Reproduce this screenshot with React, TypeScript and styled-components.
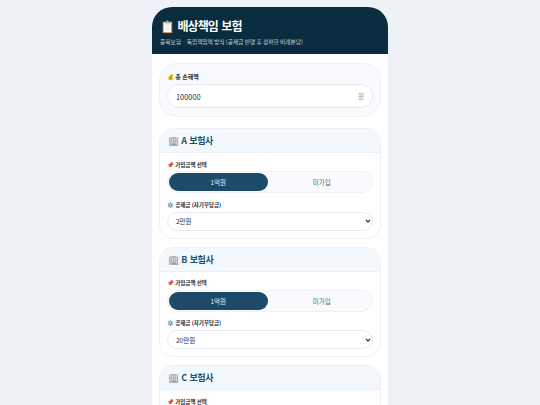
import { FC } from "react"
import styled, { createGlobalStyle } from "styled-components"

const GlobalStyle = createGlobalStyle`
  html, body {
    margin: 0;
    height: 405px;
    overflow: hidden;
    background: #eef2f6;
    font-family: "Noto Sans CJK KR", "Noto Sans", sans-serif;
  }
  * { box-sizing: border-box; }
`

const chevron =
  "data:image/svg+xml,%3Csvg xmlns='http://www.w3.org/2000/svg' viewBox='0 0 6 6'%3E%3Cpath d='M1 2 L3 4 L5 2' fill='none' stroke='%231f2d3a' stroke-width='1.1'/%3E%3C/svg%3E"

const Page = styled.div`
  display: flex;
  justify-content: center;
  padding-top: 7px;
`

const Phone = styled.main`
  width: 236px;
  background: #ffffff;
  border-radius: 20px 20px 0 0;
  overflow: hidden;
`

const Header = styled.header`
  height: 47px;
  background: #0a2c3f;
  padding: 10px 8px 0;
  color: #ffffff;
`

const Title = styled.h1`
  margin: 0;
  font-size: 12px;
  line-height: 18px;
  font-weight: 700;
  letter-spacing: -0.9px;
  word-spacing: 1.5px;
`

const Subtitle = styled.p`
  margin: 1.5px 0 0;
  font-size: 5.7px;
  line-height: 9px;
  color: #c4d3dc;
  white-space: nowrap;
`

const Body = styled.div`
  display: flex;
  flex-direction: column;
  gap: 8px;
  padding: 9px 7px 0;
`

const LossPanel = styled.section`
  height: 54px;
  margin-bottom: 3px;
  padding: 8px 7px 0;
  background: #f8fafd;
  border: 1px solid #edf1f6;
  border-radius: 18px;
`

const Label = styled.div<{ $size?: number }>`
  font-size: ${({ $size }) => $size ?? 5.5}px;
  line-height: 9px;
  font-weight: 600;
  color: #1f2d3a;
  white-space: nowrap;
`

const AmountBox = styled.div`
  display: flex;
  align-items: center;
  height: 24px;
  margin-top: 3px;
  padding: 0 8px;
  background: #ffffff;
  border: 1px solid #e6ebf2;
  border-radius: 12px;
`

const AmountInput = styled.input`
  flex: 1;
  min-width: 0;
  padding: 0;
  border: 0;
  outline: 0;
  background: transparent;
  font-family: inherit;
  font-size: 7.4px;
  color: #1f2d3a;
`

const Unit = styled.span`
  font-size: 6.5px;
  color: #8a949e;
`

const CompanyCard = styled.section`
  flex: none;
  background: #ffffff;
  border: 1px solid #edf1f6;
  border-radius: 14px;
  overflow: hidden;
`

const CompanyHeader = styled.h2`
  display: flex;
  align-items: center;
  height: 24px;
  margin: 0;
  padding: 0 8px;
  background: #f3f8fc;
  border-bottom: 1px solid #e9f0f6;
  font-size: 9px;
  font-weight: 700;
  letter-spacing: -0.4px;
  word-spacing: 1px;
  color: #1d5070;
  white-space: pre;
`

const CompanyBody = styled.div`
  padding: 7.5px 7px 7px;
`

const Toggle = styled.div`
  display: grid;
  grid-template-columns: 1fr 1fr;
  gap: 5px;
  height: 22px;
  margin: 1.5px 0 7.5px;
  padding: 1px;
  background: #f8fafd;
  border: 1px solid #edf1f6;
  border-radius: 11px;
`

const Option = styled.div<{ $active?: boolean }>`
  display: flex;
  align-items: center;
  justify-content: center;
  border-radius: 9px;
  font-size: 6.5px;
  color: ${({ $active }) => ($active ? "#e8f0f5" : "#5b6672")};
  background: ${({ $active }) => ($active ? "#1d4a68" : "transparent")};
`

const Select = styled.select`
  display: block;
  width: 100%;
  height: 19px;
  margin-top: 2px;
  padding: 0 0 0 8px;
  appearance: none;
  background: #ffffff url("${chevron}") no-repeat right 1px center / 6px 6px;
  border: 1px solid #e6ebf2;
  border-radius: 10px;
  font-family: inherit;
  font-size: 6.5px;
  color: #1f2d3a;
  outline: 0;
`

const Company: FC<{ name: string; deductible: string }> = ({ name, deductible }) => (
  <CompanyCard>
    <CompanyHeader>🏢 {name} 보험사</CompanyHeader>
    <CompanyBody>
      <Label>📌 가입금액 선택</Label>
      <Toggle>
        <Option $active>1억원</Option>
        <Option>미가입</Option>
      </Toggle>
      <Label>⚙️ 공제금 (자기부담금)</Label>
      <Select defaultValue={deductible}>
        <option>2만원</option>
        <option>20만원</option>
      </Select>
    </CompanyBody>
  </CompanyCard>
)

export default function App() {
  return (
    <Page>
      <GlobalStyle />
      <Phone>
        <Header>
          <Title>📋 배상책임 보험</Title>
          <Subtitle>중복보험 · 독립책임액 방식 (공제금 반영 후 정확한 비례분담)</Subtitle>
        </Header>
        <Body>
          <LossPanel>
            <Label $size={6}>💰 총 손해액</Label>
            <AmountBox>
              <AmountInput defaultValue="100000" />
              <Unit>원</Unit>
            </AmountBox>
          </LossPanel>
          <Company name="A" deductible="2만원" />
          <Company name="B" deductible="20만원" />
          <Company name="C" deductible="2만원" />
        </Body>
      </Phone>
    </Page>
  )
}
